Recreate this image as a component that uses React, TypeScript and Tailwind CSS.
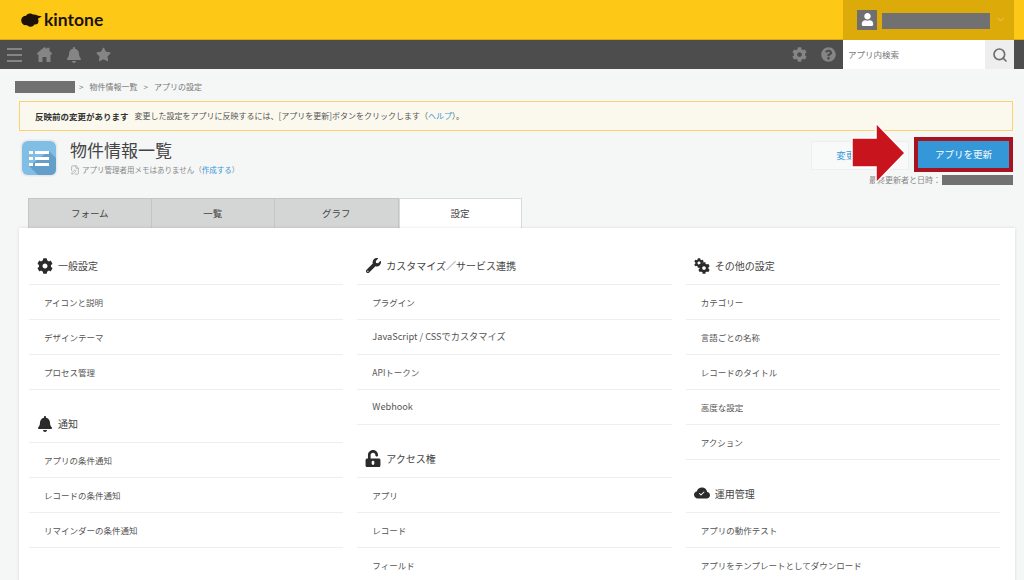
import type { ReactNode } from "react";
import { FaBell, FaCog, FaQuestionCircle, FaStar, FaUnlockAlt, FaUser, FaWrench } from "react-icons/fa";
import { BsCloudCheckFill } from "react-icons/bs";
import { ChevronDown, FilePen, Search } from "lucide-react";

const Redacted = ({ className }: { className: string }) => <div className={`bg-[#717171] ${className}`} />;

const Section = ({ icon, title, items, first }: { icon: ReactNode; title: string; items: string[]; first?: boolean }) => (
  <div className={first ? "" : "mt-[15px]"}>
    <div className="flex h-[38px] items-center gap-[5px] border-b border-[#eeeeee] pl-[8px] text-[10px] text-[#444444]">
      <span className="flex w-[16px] justify-center text-[15px] text-[#2b2b2b]">{icon}</span>
      <span>{title}</span>
    </div>
    {items.map((item) => (
      <div
        key={item}
        className={`flex h-[35px] items-center border-b border-[#eeeeee] pl-[15px] text-[#555555] ${/[a-z]/.test(item) ? "text-[9.2px]" : "text-[8.5px]"}`}
      >
        {item}
      </div>
    ))}
  </div>
);

const tabs = ["フォーム", "一覧", "グラフ"];

export default function App() {
  return (
    <div className="relative flex h-[580px] w-[1024px] flex-col overflow-hidden bg-[#f5f6f6] font-['Noto_Sans_CJK_JP','Liberation_Sans',sans-serif]">
      {/* top bar */}
      <div className="flex h-[40px] shrink-0 border-b border-[#d9a90f] bg-[#fdc916] pr-[10px]">
        <div className="flex flex-1 items-center gap-[2px] pl-[21px]">
          <svg width="21" height="14" viewBox="0 0 21 14" fill="#1d1208">
            <circle cx="5" cy="7.500" r="4.800" />
            <circle cx="9" cy="5" r="4.500" />
            <circle cx="13" cy="5.500" r="4" />
            <circle cx="9.500" cy="9.500" r="4.300" />
            <circle cx="14" cy="8" r="3.500" />
            <path d="M14 2 21 3.500 16 6Z" />
          </svg>
          <span className="font-['Lato',sans-serif] text-[17.5px] font-bold leading-none text-[#1d1208]">kintone</span>
        </div>
        <div className="flex w-[171px] items-center bg-[#dcab09] pl-[14px]">
          <div className="flex h-[20px] w-[20px] items-center justify-center bg-[#6f6f6f] text-[13px] text-white">
            <FaUser />
          </div>
          <Redacted className="ml-[5px] mt-[2px] h-[16px] w-[108px]" />
          <ChevronDown size={11} className="ml-[5px] text-[#eecb62]" />
        </div>
      </div>

      {/* nav bar */}
      <div className="flex h-[29px] shrink-0 items-center bg-[#4d4d4d] pr-[10px] text-[#858585]">
        <div className="ml-[7px] flex w-[15px] flex-col gap-[4px]">
          <div className="h-[2px] bg-[#858585]" />
          <div className="h-[2px] bg-[#858585]" />
          <div className="h-[2px] bg-[#858585]" />
        </div>
        <svg width="15" height="15" viewBox="0 0 15 15" fill="#858585" className="ml-[15px]">
          <path d="M7.500 0 10 2V.8H12.500V4L15 6.200V7.500H13.500V15H9.500V10H5.500V15H1.500V7.500H0V6.200Z" />
        </svg>
        <FaBell className="ml-[14px] text-[16px]" />
        <FaStar className="ml-[14px] text-[15px]" />
        <div className="ml-auto flex items-center">
          <FaCog className="text-[15px]" />
          <FaQuestionCircle className="ml-[14px] text-[15px]" />
          <div className="ml-[7px] flex h-[29px] w-[171px] items-center bg-white">
            <span className="flex-1 pl-[5px] text-[8.5px] text-[#777777]">アプリ内検索</span>
            <div className="flex h-[29px] w-[29px] items-center justify-center bg-[#eeeeee] text-[#6f6f6f]">
              <Search size={16} strokeWidth={2.5} />
            </div>
          </div>
        </div>
      </div>

      {/* breadcrumb */}
      <div className="mt-[12px] flex h-[12px] shrink-0 items-center pl-[15px] text-[8px] text-[#777777]">
        <Redacted className="h-[12px] w-[60px]" />
        <span className="ml-[4px]">&gt;</span>
        <span className="ml-[6px]">物件情報一覧</span>
        <span className="ml-[6px]">&gt;</span>
        <span className="ml-[6px]">アプリの設定</span>
      </div>

      {/* notice */}
      <div className="ml-[19px] mr-[11px] mt-[8px] flex h-[30px] shrink-0 items-center border border-[#fcd271] bg-[#fbf9ee] pl-[15px] text-[8px] text-[#555555]">
        <span className="text-[8.5px] font-bold text-[#333333]">反映前の変更があります</span>
        <span className="ml-[6px]">変更した設定をアプリに反映するには、[アプリを更新]ボタンをクリックします（</span>
        <span className="text-[#3498db]">ヘルプ</span>
        <span>）。</span>
      </div>

      {/* app header */}
      <div className="flex h-[67px] shrink-0 pl-[20px] pr-[11px] pt-[6px]">
        <svg width="38" height="38" viewBox="0 0 38 38" className="mt-[2px]">
          <rect x="0.5" y="0.5" width="37" height="37" rx="7" fill="#e6e8e9" />
          <rect x="2" y="2" width="34" height="34" rx="6" fill="#80bee6" />
          <path d="M9 27 L29 12 L36 19 L36 30 Q36 36 30 36 L18 36 Z" fill="#639fc9" />
          <rect x="9" y="12" width="4" height="3" fill="#fff" />
          <rect x="15" y="12" width="14" height="3" fill="#fff" />
          <rect x="9" y="18" width="4" height="3" fill="#fff" />
          <rect x="15" y="18" width="14" height="3" fill="#fff" />
          <rect x="9" y="24" width="4" height="3" fill="#fff" />
          <rect x="15" y="24" width="14" height="3" fill="#fff" />
        </svg>
        <div className="ml-[12px] flex-1">
          <div className="mt-[1px] text-[17px] leading-[24px] text-[#444444]">物件情報一覧</div>
          <div className="mt-[2px] flex items-center text-[7.5px] leading-[12px] text-[#888888]">
            <FilePen size={10} className="mr-[2px] text-[#aaaaaa]" />
            <span>アプリ管理者用メモはありません（</span>
            <span className="text-[#3498db]">作成する</span>
            <span>）</span>
          </div>
        </div>
        <div className="flex flex-col items-end">
          <div className="flex items-center">
            <div className="mt-[1px] flex h-[29px] w-[98px] items-center justify-center border border-[#eeeeee] bg-[#f8f9f9] text-[9.500px] text-[#3498db]">
              変更を中止
            </div>
            <div className="ml-[5px] flex h-[35px] w-[99px] items-center justify-center border-[4px] border-[#a7141f] bg-[#3498d8] text-[9.500px] text-white">
              アプリを更新
            </div>
          </div>
          <div className="mt-[3px] flex items-center text-[8px] leading-[10px] text-[#888888]">
            <span>最終更新者と日時：</span>
            <Redacted className="ml-[1px] h-[10px] w-[71px]" />
          </div>
        </div>
      </div>

      {/* tabs */}
      <div className="flex h-[30px] shrink-0 pl-[28px]">
        {tabs.map((t) => (
          <div key={t} className="flex w-[123.500px] items-center justify-center border border-b-0 border-l-0 border-[#c3c6c5] bg-[#d3d6d5] text-[9.500px] text-[#444444] first:border-l">
            {t}
          </div>
        ))}
        <div className="flex w-[123px] items-center justify-center border border-b-0 border-[#d8dada] bg-white text-[9.500px] text-[#444444]">設定</div>
      </div>

      {/* settings panel */}
      <div className="ml-[19px] mr-[9px] grid flex-1 grid-cols-3 gap-x-[14px] bg-white pl-[10px] pr-[15px] pt-[19px] shadow-[0_0_3px_rgba(0,0,0,0.12)]">
        <div>
          <Section first icon={<FaCog className="text-[16px]" />} title="一般設定" items={["アイコンと説明", "デザインテーマ", "プロセス管理"]} />
          <Section icon={<FaBell className="text-[16px]" />} title="通知" items={["アプリの条件通知", "レコードの条件通知", "リマインダーの条件通知"]} />
        </div>
        <div>
          <Section first icon={<FaWrench className="text-[15px]" />} title="カスタマイズ／サービス連携" items={["プラグイン", "JavaScript / CSSでカスタマイズ", "APIトークン", "Webhook"]} />
          <Section icon={<FaUnlockAlt className="text-[17px]" />} title="アクセス権" items={["アプリ", "レコード", "フィールド"]} />
        </div>
        <div>
          <Section
            first
            icon={
              <span className="relative block h-[16px] w-[16px]">
                <FaCog className="absolute left-0 top-0 text-[10px]" />
                <FaCog className="absolute bottom-0 right-0 text-[12px]" />
              </span>
            }
            title="その他の設定"
            items={["カテゴリー", "言語ごとの名称", "レコードのタイトル", "高度な設定", "アクション"]}
          />
          <Section icon={<BsCloudCheckFill className="text-[17px]" />} title="運用管理" items={["アプリの動作テスト", "アプリをテンプレートとしてダウンロード"]} />
        </div>
      </div>

      {/* annotation arrow over the buttons */}
      <svg width="60" height="66" viewBox="0 0 60 66" className="absolute left-[850px] top-[120px]">
        <path d="M2 18H26V3L55 33 26 63V47H2Z" fill="#c8141c" stroke="#ffffff" strokeWidth="1.500" />
      </svg>
    </div>
  );
}
